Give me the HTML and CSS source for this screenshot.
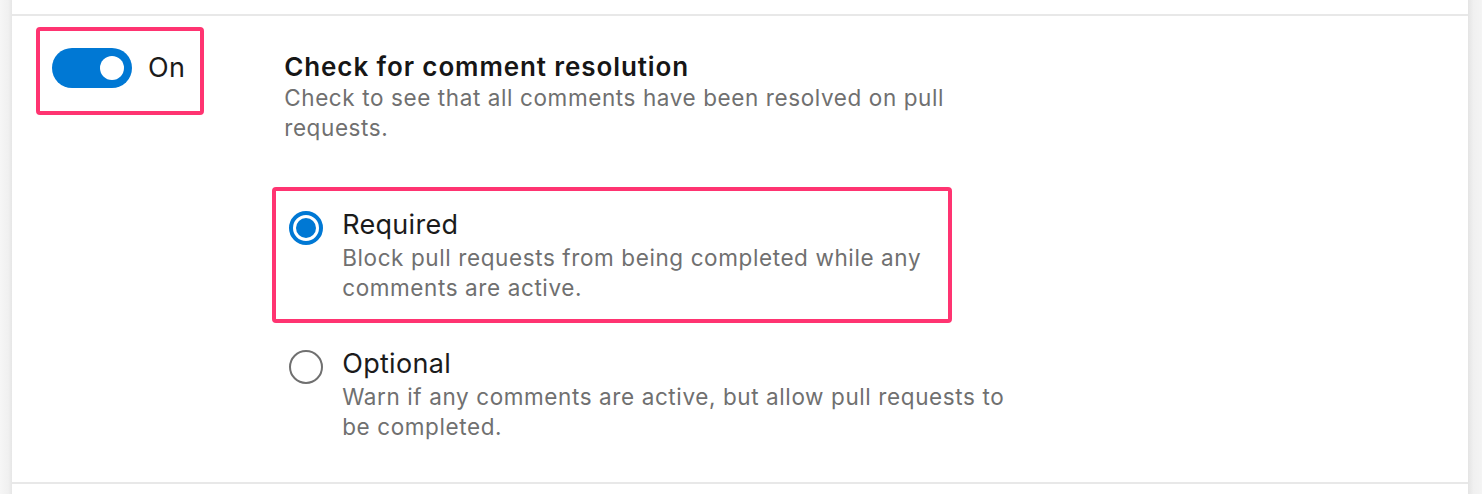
FILE: index.html
```html
<!DOCTYPE html>
<html lang="en">
<head>
<meta charset="utf-8">
<title>Check for comment resolution</title>
<link rel="stylesheet" href="styles.css">
</head>
<body>
<div class="strip strip-left"></div>
<main class="main">
  <section class="policy">
    <div class="toggle-wrap annot">
      <span class="toggle"><span class="knob"></span></span>
      <span class="toggle-label">On</span>
    </div>
    <div class="content">
      <h2 class="title">Check for comment resolution</h2>
      <p class="desc">Check to see that all comments have been resolved on pull requests.</p>
      <div class="options">
        <div class="option selected annot">
          <span class="radio checked"><span class="dot"></span></span>
          <div class="option-text">
            <div class="label">Required</div>
            <div class="option-desc">Block pull requests from being completed while any comments are active.</div>
          </div>
        </div>
        <div class="option">
          <span class="radio"></span>
          <div class="option-text">
            <div class="label">Optional</div>
            <div class="option-desc">Warn if any comments are active, but allow pull requests to be completed.</div>
          </div>
        </div>
      </div>
    </div>
  </section>
</main>
<div class="strip strip-right"></div>
</body>
</html>
```
FILE: styles.css
```css
* { box-sizing: border-box; }
html, body { margin: 0; padding: 0; }
body {
  height: 494px;
  display: flex;
  background: #ffffff;
  font-family: Inter, "Liberation Sans", sans-serif;
  color: #1b1b1b;
  overflow: hidden;
}
.strip { flex: none; height: 100%; }
.strip-left {
  width: 12px;
  background: linear-gradient(to right, #f6f6f6, #f0f0f0 70%, #e6e6e6);
}
.strip-right {
  width: 14px;
  background: linear-gradient(to right, #e4e4e4, #f0f0f0 40%, #f4f4f4);
}
.main {
  flex: 1;
  padding-top: 14px;
}
.policy {
  display: flex;
  align-items: flex-start;
  height: 470px;
  border-top: 2px solid #e8e8e8;
  border-bottom: 2px solid #e8e8e8;
  padding: 11px 0 0 24px;
}
.annot { border: 4px solid #ff3471; border-radius: 4px; }
.toggle-wrap {
  display: flex;
  align-items: center;
  gap: 16px;
  padding: 17px 15px 23px 12px;
}
.toggle {
  position: relative;
  width: 80px;
  height: 40px;
  border-radius: 20px;
  background: #0078d4;
  display: block;
}
.knob {
  position: absolute;
  right: 8px;
  top: 8px;
  width: 24px;
  height: 24px;
  border-radius: 50%;
  background: #ffffff;
}
.toggle-label {
  font-size: 27px;
  line-height: 36px;
  letter-spacing: 0.3px;
  color: #1b1b1b;
}
.content {
  margin-left: 68px;
  padding-top: 25px;
}
.title {
  margin: 0 0 0 12px;
  font-size: 26px;
  line-height: 30px;
  font-weight: 600;
  letter-spacing: 0.9px;
  color: #161616;
}
.desc {
  margin: 1px 0 0 12px;
  max-width: 690px;
  font-size: 22.5px;
  line-height: 30px;
  letter-spacing: 0.6px;
  color: #707070;
}
.options {
  margin-top: 44px;
  display: flex;
  flex-direction: column;
  gap: 3px;
  align-items: flex-start;
}
.option {
  display: flex;
  align-items: flex-start;
  gap: 19px;
  padding: 16px 16px 16px 13px;
  border: 4px solid transparent;
}
.option.selected {
  border-color: #ff3471;
  width: 680px;
}
.radio {
  flex: none;
  width: 34px;
  height: 34px;
  margin-top: 4px;
  border-radius: 50%;
  border: 2px solid #707070;
  display: flex;
  align-items: center;
  justify-content: center;
}
.radio.checked {
  border: 4px solid #0078d4;
}
.dot {
  width: 20px;
  height: 20px;
  border-radius: 50%;
  background: #0078d4;
}
.label {
  font-size: 27px;
  line-height: 36px;
  letter-spacing: 0.3px;
  color: #1b1b1b;
}
.option-desc {
  max-width: 684px;
  font-size: 22.5px;
  line-height: 30px;
  letter-spacing: 0.6px;
  color: #707070;
}
```
